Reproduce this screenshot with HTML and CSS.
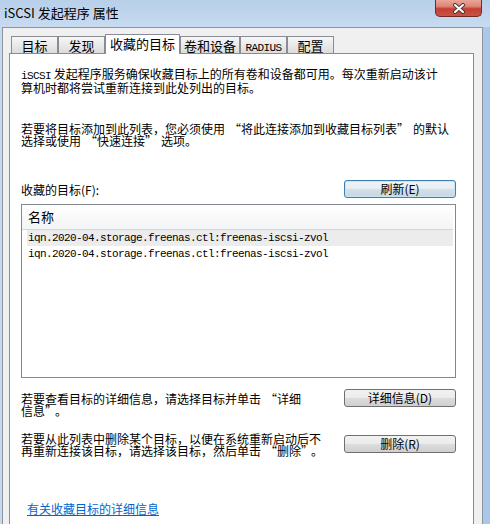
FILE: index.html
```html
<!DOCTYPE html>
<html lang="zh-CN">
<head>
    <meta charset="UTF-8">
    <title>iSCSI 发起程序 属性</title>
    <link rel="stylesheet" href="styles.css">
</head>
<body>
    <div class="window">
        <div class="titlebar">
            <span class="title">iSCSI 发起程序 属性</span>
            <button type="button" class="close">
                <svg width="14" height="11" viewBox="0 0 14 11">
                    <path d="M3 2 L11 9 M11 2 L3 9" stroke="#4a3a3a" stroke-width="4" stroke-linecap="round"/>
                    <path d="M3 2 L11 9 M11 2 L3 9" stroke="#fff" stroke-width="2" stroke-linecap="round"/>
                </svg>
            </button>
        </div>

        <div class="client">
            <div class="tabs">
                <div class="tab">目标</div>
                <div class="tab">发现</div>
                <div class="tab active">收藏的目标</div>
                <div class="tab">卷和设备</div>
                <div class="tab"><span class="latin">RADIUS</span></div>
                <div class="tab">配置</div>
            </div>

            <div class="panel">
                <p class="intro"><span class="latin">iSCSI</span> 发起程序服务确保收藏目标上的所有卷和设备都可用。每次重新启动该计<br>算机时都将尝试重新连接到此处列出的目标。</p>

                <p class="hint">若要将目标添加到此列表，您必须使用<span class="lq">“</span>将此连接添加到收藏目标列表<span class="rq">”</span>的默认<br>选择或使用<span class="lq">“</span>快速连接<span class="rq">”</span>选项。</p>

                <div class="fav-row">
                    <span>收藏的目标(F):</span>
                    <button type="button" class="btn default">刷新(E)</button>
                </div>

                <div class="list">
                    <div class="list-head">名称</div>
                    <div class="list-row selected">iqn.2020-04.storage.freenas.ctl:freenas-iscsi-zvol</div>
                    <div class="list-row">iqn.2020-04.storage.freenas.ctl:freenas-iscsi-zvol</div>
                </div>

                <div class="action-row details">
                    <p class="note">若要查看目标的详细信息，请选择目标并单击<span class="lq">“</span>详细<br>信息<span class="rq">”</span>。</p>
                    <button type="button" class="btn">详细信息(D)</button>
                </div>

                <div class="action-row remove">
                    <p class="note">若要从此列表中删除某个目标，以便在系统重新启动后不<br>再重新连接该目标，请选择该目标，然后单击<span class="lq">“</span>删除<span class="rq">”</span>。</p>
                    <button type="button" class="btn">删除(R)</button>
                </div>

                <a class="more-link" href="#">有关收藏目标的详细信息</a>
            </div>
        </div>
    </div>
</body>
</html>
```

FILE: styles.css
```css
body {
    margin: 0;
    width: 490px;
    height: 524px;
    overflow: hidden;
    font-family: "Noto Sans CJK SC", sans-serif;
    font-size: 12px;
    color: #000;
    background: linear-gradient(to right, #c6daef, #bcd3ec 50%, #a9c7e8);
}
.window {
    display: flex;
    flex-direction: column;
    height: 524px;
}
.titlebar {
    height: 27px;
    flex-shrink: 0;
    display: flex;
    justify-content: space-between;
    align-items: flex-start;
    background: linear-gradient(#b7cfe9, #c8dbf0);
}
.title {
    margin: 5px 0 0 4px;
    font-size: 13px;
    line-height: 15px;
}
.close {
    width: 47px;
    height: 17px;
    margin-right: 8px;
    padding: 0;
    border: 1px solid #6e2a25;
    border-top: none;
    border-radius: 0 0 5px 5px;
    background: linear-gradient(#eaa699, #dc8577 40%, #c4402f 55%, #c85347);
    display: flex;
    align-items: center;
    justify-content: center;
}
.latin {
    font-family: "Liberation Mono", monospace;
    font-size: 11px;
    letter-spacing: -0.6px;
}
/* quotes sit in wider cells in the dialog font */
.lq {
    margin-left: 4px;
}
.rq {
    margin-right: 4px;
}
.client {
    flex: 1;
    margin: 0 7px 0 2px;
    border: 1px solid #8e949b;
    border-bottom: none;
    background: #f0f0f0;
    display: flex;
    flex-direction: column;
}
.tabs {
    display: flex;
    align-items: flex-end;
    padding: 6px 0 0 8px;
}
.tab {
    height: 16px;
    min-width: 39px;
    padding: 0 3px;
    border: 1px solid #898c95;
    border-bottom: none;
    background: linear-gradient(#f7f7f7, #dcdcdc);
    font-size: 13px;
    line-height: 17px;
    text-align: center;
}
.tab.active {
    height: 19px;
    padding: 0 4px;
    margin-bottom: -1px;
    background: #fff;
    line-height: 17px;
    position: relative;
    z-index: 1;
}
.panel {
    flex: 1;
    margin: 0 8px 0 6px;
    padding: 14px 17px 0 11px;
    background: #fff;
    border: 1px solid #898c95;
    border-bottom: none;
}
p {
    margin: 0;
    line-height: 12px;
}
.hint {
    margin-top: 29px;
}
.fav-row {
    display: flex;
    justify-content: space-between;
    align-items: center;
    margin-top: 33px;
}
.btn {
    width: 112px;
    height: 18px;
    padding: 0;
    border: 1px solid #707070;
    border-radius: 3px;
    background: linear-gradient(#f2f2f2, #ebebeb 50%, #dddddd 50%, #cfcfcf);
    font-family: "Noto Sans CJK SC", sans-serif;
    font-size: 12px;
    line-height: 16px;
    color: #000;
}
.btn.default {
    border-color: #3c7fb1;
    box-shadow: inset 0 0 0 1px #c4e5f6;
    background: linear-gradient(#f0f4f7, #e6edf2 50%, #d5e0e8 50%, #c9d6e0);
}
.list {
    margin-top: 6px;
    height: 174px;
    box-sizing: border-box;
    border: 1px solid #828790;
}
.list-head {
    height: 24px;
    margin-right: 2px;
    padding-left: 6px;
    border-bottom: 1px solid #d5d5d5;
    background: linear-gradient(#ffffff, #f3f4f6);
    font-size: 13px;
    line-height: 24px;
}
.list-row {
    height: 16px;
    margin: 0 2px 0 5px;
    padding-left: 1px;
    font-family: "Liberation Mono", monospace;
    font-size: 11px;
    letter-spacing: -0.6px;
    line-height: 17px;
}
.list-row.selected {
    background: #ececec;
}
.action-row {
    display: flex;
    justify-content: space-between;
    align-items: flex-start;
}
.details {
    margin-top: 11px;
}
.details .note {
    padding-top: 4px;
}
.remove {
    margin-top: 16px;
}
.remove .btn {
    margin-top: 2px;
}
.more-link {
    display: inline-block;
    margin: 46px 0 0 6px;
    color: #0066cc;
    line-height: 12px;
    text-decoration: underline;
}
```
